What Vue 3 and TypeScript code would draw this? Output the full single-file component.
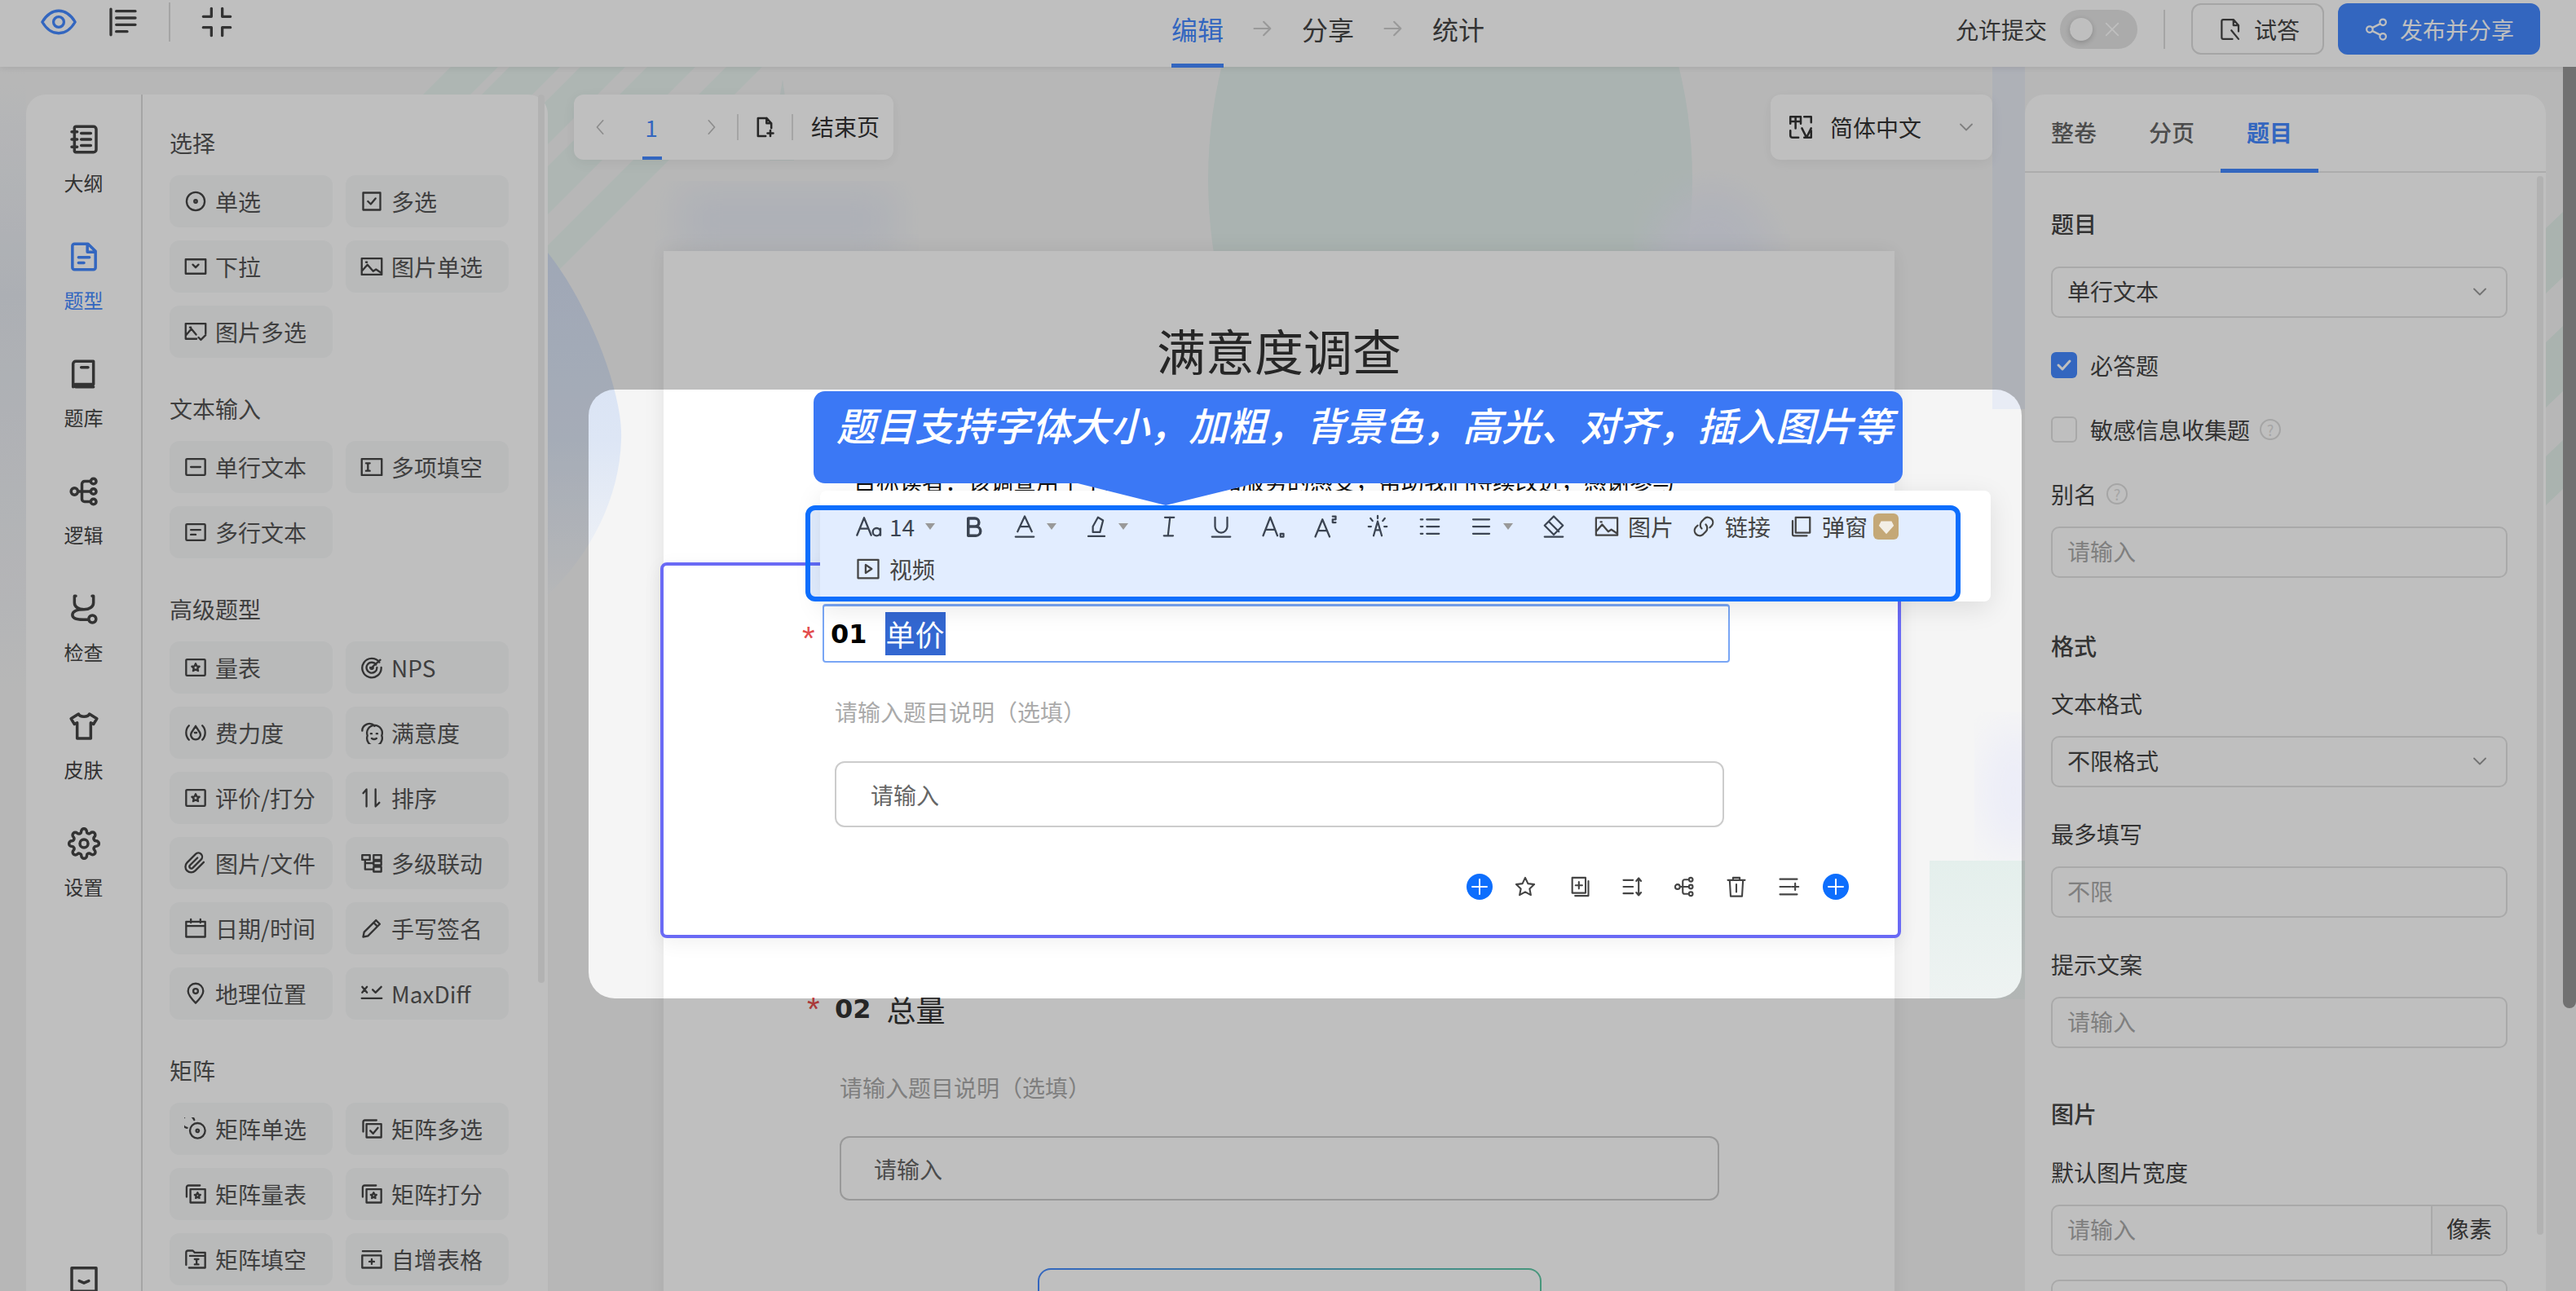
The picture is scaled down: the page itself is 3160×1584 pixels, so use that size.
<script setup lang="ts">
// stroke paths, all on a 24x24 box
const icons: Record<string, string> = {
  outline: "M6 2.5h13a2 2 0 0 1 2 2v15a2 2 0 0 1-2 2H6a1 1 0 0 1-1-1v-17a1 1 0 0 1 1-1z M3 6.5h4M3 12h4M3 17.5h4M10 7.5h7M10 12h7M10 16.5h7",
  doc: "M5 2.5h10l5.5 5.5v12a1.5 1.5 0 0 1-1.5 1.5H5A1.5 1.5 0 0 1 3.5 20V4A1.5 1.5 0 0 1 5 2.5z M14.5 2.5v6h6M8 12.5h8M8 16.5h4",
  book: "M6 2.5h13v17H6a2 2 0 0 0-2 2V4.5a2 2 0 0 1 2-2zM4 19.5a2 2 0 0 0 2 2h13M10 7h5",
  logic: "M2.5 12a2.5 2.5 0 1 0 5 0a2.5 2.5 0 1 0-5 0zM17 4.5a2 2 0 1 0 4 0a2 2 0 1 0-4 0zM17 12a2 2 0 1 0 4 0a2 2 0 1 0-4 0zM17 19.5a2 2 0 1 0 4 0a2 2 0 1 0-4 0zM7.5 12H17M10.5 12V6.5a2 2 0 0 1 2-2H17M10.5 12v5.5a2 2 0 0 0 2 2H17",
  scope: "M6 2.5H5v5c0 3 3 5 7 5s7-2 7-5v-5h-1M12 12.5c-5 0-8.5 1-8.5 4s3.5 3.5 8 3.5h4M15.5 19.5a2.7 2.7 0 1 0 5.4 0a2.7 2.7 0 1 0-5.4 0z",
  shirt: "M8 3L2.5 6.5l2.5 4 2-1V21h10V9.5l2 1 2.5-4L16 3c-1 2.5-7 2.5-8 0z",
  gear: "M9 12a3 3 0 1 0 6 0a3 3 0 1 0-6 0zM19.4 15a1.65 1.65 0 0 0 .33 1.82l.06.06a2 2 0 0 1 0 2.83 2 2 0 0 1-2.83 0l-.06-.06a1.65 1.65 0 0 0-1.82-.33 1.65 1.65 0 0 0-1 1.51V21a2 2 0 0 1-2 2 2 2 0 0 1-2-2v-.09A1.65 1.65 0 0 0 9 19.4a1.65 1.65 0 0 0-1.82.33l-.06.06a2 2 0 0 1-2.83 0 2 2 0 0 1 0-2.83l.06-.06a1.65 1.65 0 0 0 .33-1.82 1.65 1.65 0 0 0-1.51-1H3a2 2 0 0 1-2-2 2 2 0 0 1 2-2h.09A1.65 1.65 0 0 0 4.6 9a1.65 1.65 0 0 0-.33-1.82l-.06-.06a2 2 0 0 1 0-2.83 2 2 0 0 1 2.83 0l.06.06a1.65 1.65 0 0 0 1.82.33H9a1.65 1.65 0 0 0 1-1.51V3a2 2 0 0 1 2-2 2 2 0 0 1 2 2v.09a1.65 1.65 0 0 0 1 1.51 1.65 1.65 0 0 0 1.82-.33l.06-.06a2 2 0 0 1 2.83 0 2 2 0 0 1 0 2.83l-.06.06a1.65 1.65 0 0 0-.33 1.82V9a1.65 1.65 0 0 0 1.51 1H21a2 2 0 0 1 2 2 2 2 0 0 1-2 2h-.09a1.65 1.65 0 0 0-1.51 1z",
  fold: "M3 3.5h18v17H3zM8.5 13l3.5 1.5L15.5 13",
  radio: "M2.5 12a9.5 9.5 0 1 0 19 0a9.5 9.5 0 1 0-19 0zM10.5 12a1.5 1.5 0 1 0 3 0a1.5 1.5 0 1 0-3 0z",
  check: "M3 3h18v18H3zM8 12l3 3 5-6",
  drop: "M1.5 4.5h21v15h-21zM9 10l3 3 3-3",
  image: "M1.5 3.5h21v17h-21zM1.5 17l6-7 6 7 3-2 6 4M6 7.5h1",
  imagem: "M22.5 14V3.5h-21v16H13M1.5 16l6-7 5 6M6 7.5h1M15 18l2.5 2.5 5-5",
  line: "M3 3.5h18a1 1 0 0 1 1 1v15a1 1 0 0 1-1 1H3a1 1 0 0 1-1-1v-15a1 1 0 0 1 1-1zM7 12h10",
  multi: "M1.5 3.5h21v17h-21zM6 8h4M6 16h4M8 8v8",
  lines: "M3 3.5h18a1 1 0 0 1 1 1v15a1 1 0 0 1-1 1H3a1 1 0 0 1-1-1v-15a1 1 0 0 1 1-1zM7 9.5h10M7 14.5h5",
  scale: "M3 3.5h18a1 1 0 0 1 1 1v15a1 1 0 0 1-1 1H3a1 1 0 0 1-1-1v-15a1 1 0 0 1 1-1zM12 8l1.2 2.6 2.8.3-2 1.9.6 2.7-2.6-1.4-2.6 1.4.6-2.7-2-1.9 2.8-.3z",
  nps: "M20 6.5A10 10 0 1 0 22 12M16.5 9a5.5 5.5 0 1 0 1 3M10.5 12a1.5 1.5 0 1 0 3 0M12 12l9-8",
  effort: "M5 4.5c-4 4-4 11 0 15M19 4.5c4 4 4 11 0 15M12 5l-4.5 7a5 5 0 1 0 9 0zM11 12h2",
  smile: "M2 10a7.5 7.5 0 0 1 13-5M7.5 15a8 8 0 1 0 15 0a8 8 0 1 0-15 0zM11 13h1M17 13h1M12 18c1.5 1 3.5 1 5 0",
  sort: "M6.5 21V3L3 7M16 3v18l4-4",
  clip: "M20.5 11l-9 9a6 6 0 0 1-8.5-8.5l9-9a4 4 0 0 1 5.7 5.7l-9 9a2 2 0 0 1-2.8-2.8l8-8",
  cascade: "M2 3.5h8v5H2zM14 3.5h8v5h-8zM14 10h8v4h-8zM14 16h8v5h-8zM5 8.5V18.5h9M5 12h9",
  date: "M2 5h20v16H2zM2 9.5h20M7 2.5V6M17 2.5V6",
  pen: "M3 21l1-5L16.5 3.5l4 4L8 20zM14 6l4 4",
  pin: "M12 22c-5-5-8-8.5-8-12.5a8 8 0 0 1 16 0c0 4-3 7.5-8 12.5zM9.5 9.5a2.5 2.5 0 1 0 5 0a2.5 2.5 0 1 0-5 0z",
  maxdiff: "M2 5l5 6M7 5l-5 6M13 8l3 3 6-6M1.5 17h21",
  mradio: "M10.5 2.6A6.5 6.5 0 1 0 3 11M6 14a8 8 0 1 0 16 0a8 8 0 1 0-16 0zM12.5 14a1.5 1.5 0 1 0 3 0a1.5 1.5 0 1 0-3 0z",
  mcheck: "M3 15V5a2 2 0 0 1 2-2h12M6.5 7h15.5v14H6.5zM10.5 14l3 3 5-6",
  mscale: "M2.5 15V5a2 2 0 0 1 2-2h12M6.5 7h15.5v14H6.5zM14 10.5l1 2 2 .3-1.5 1.4.4 2-1.9-1-1.9 1 .4-2-1.5-1.4 2-.3z",
  mfill: "M2 18V5a2 2 0 0 1 2-2h5l2 2h11v16H5M6 8.5h16M11 12h4M13 12v5.5M11 17.5h4",
  addtable: "M2.5 3.5h19M2 8h20v13H2zM9.5 14.5h5M12 12v5",
  list: "M3 2.5v19M7 4h14M7 9h14M7 14h14M7 19h8",
  share: "M2.5 12a3 3 0 1 0 6 0a3 3 0 1 0-6 0zM15.5 5a3 3 0 1 0 6 0a3 3 0 1 0-6 0zM15.5 19a3 3 0 1 0 6 0a3 3 0 1 0-6 0zM8 10.5l8-4M8 13.5l8 4",
  trial: "M15 2.5H5a1.5 1.5 0 0 0-1.5 1.5v16A1.5 1.5 0 0 0 5 21.5h9M15 2.5L20 8v6M15 2.5V8h5M13 13l7 8.5",
  chevron: "M5 8.5l7 7 7-7",
  chevleft: "M15 3l-8 9 8 9",
  chevright: "M9 3l8 9-8 9",
  arrow: "M3 12h17M13 5l7 7-7 7",
  addpage: "M14 2.5H5v19h8M14 2.5L19 8v5M14 2.5V8h5M18 15.5v6M15 18.5h6",
  lang: "M3 9V3h9v6M7.5 3v10M3 7h9M15 3h6v5M21 15v6h-6M3 15v4a2 2 0 0 0 2 2h5M13 13l4 8 4-8",
  highlight: "M4 21.5h16M8.5 17.5V12l5-9 5 3-3 11.5z",
  bold: "M7 4h6.5a4 4 0 0 1 0 8H7zM7 12h7.5a4.5 4.5 0 0 1 0 9H7z",
  sun: "M12 7l-4 14M12 7l4 14M9.5 15.5h5M12 1.5v2.5M5 4l2 2.5M19 4l-2 2.5M3 12h2.5M21 12h-2.5",
  bullets: "M3 5h2M3 12h2M3 19h2M9 5h12M9 12h12M9 19h12",
  align: "M4 5h16M4 12h16M4 19h16",
  eraser: "M12 2l9 9-9 9-9-9zM7 7l10 10M3 22h18",
  link: "M10 14a5 5 0 0 1 0-7l3-3a5 5 0 0 1 7 7l-2 2M14 10a5 5 0 0 1 0 7l-3 3a5 5 0 0 1-7-7l2-2",
  popup: "M7 3h14v15H7zM4 6.5v13a1.5 1.5 0 0 0 1.5 1.5H18",
  video: "M2 3h20v18H2zM9.5 8v8l6-4z",
  star: "M12 2.5l2.9 6.2 6.6.8-4.9 4.6 1.3 6.6-5.9-3.3-5.9 3.3 1.3-6.6-4.9-4.6 6.6-.8z",
  copy: "M4 2.5h14v16H4zM21 6v15.5H7M11 7v7M7.5 10.5h7",
  sortlines: "M3 5h10M3 12h10M3 19h10M19 3v18M16.5 6L19 3l2.5 3M16.5 18l2.5 3 2.5-3",
  trash: "M3 5h18M8.5 5V2.5h7V5M5 5l1 17h12l1-17M12 9.5v8",
  addlines: "M3 4h18M3 12h11M3 20h18M19 8.5v7M15.5 12h7",
  plus: "M3 12h18M12 3v18",
  close: "M4 4l16 16M20 4L4 20",
}

type Item = { label: string; icon: string }
type Section = { title: string; items: Item[] }

const rail: (Item & { active?: boolean })[] = [
  { label: "大纲", icon: "outline" },
  { label: "题型", icon: "doc", active: true },
  { label: "题库", icon: "book" },
  { label: "逻辑", icon: "logic" },
  { label: "检查", icon: "scope" },
  { label: "皮肤", icon: "shirt" },
  { label: "设置", icon: "gear" },
]

const sections: Section[] = [
  {
    title: "选择",
    items: [
      { label: "单选", icon: "radio" },
      { label: "多选", icon: "check" },
      { label: "下拉", icon: "drop" },
      { label: "图片单选", icon: "image" },
      { label: "图片多选", icon: "imagem" },
    ],
  },
  {
    title: "文本输入",
    items: [
      { label: "单行文本", icon: "line" },
      { label: "多项填空", icon: "multi" },
      { label: "多行文本", icon: "lines" },
    ],
  },
  {
    title: "高级题型",
    items: [
      { label: "量表", icon: "scale" },
      { label: "NPS", icon: "nps" },
      { label: "费力度", icon: "effort" },
      { label: "满意度", icon: "smile" },
      { label: "评价/打分", icon: "scale" },
      { label: "排序", icon: "sort" },
      { label: "图片/文件", icon: "clip" },
      { label: "多级联动", icon: "cascade" },
      { label: "日期/时间", icon: "date" },
      { label: "手写签名", icon: "pen" },
      { label: "地理位置", icon: "pin" },
      { label: "MaxDiff", icon: "maxdiff" },
    ],
  },
  {
    title: "矩阵",
    items: [
      { label: "矩阵单选", icon: "mradio" },
      { label: "矩阵多选", icon: "mcheck" },
      { label: "矩阵量表", icon: "mscale" },
      { label: "矩阵打分", icon: "mscale" },
      { label: "矩阵填空", icon: "mfill" },
      { label: "自增表格", icon: "addtable" },
    ],
  },
]

const fields = [
  { label: "最多填写", placeholder: "不限" },
  { label: "提示文案", placeholder: "请输入" },
]

const questionOps = ["star", "copy", "sortlines", "logic", "trash", "addlines"]

// diagonal stripes behind the canvas, x of the left edge at the top of the page
const stripes = [
  { x: 553, w: 58 },
  { x: 625, w: 62 },
  { x: 712, w: 55 },
  { x: 794, w: 59 },
  { x: 891, w: 44 },
]
</script>

<template>
  <div class="app">
    <!-- page background artwork -->
    <svg class="backdrop" width="3160" height="1584" viewBox="0 0 3160 1584">
      <defs>
        <linearGradient id="fade" x1="0" y1="0" x2="0" y2="1">
          <stop offset="0" stop-color="#e4efec" />
          <stop offset="1" stop-color="#eef3f2" />
        </linearGradient>
        <linearGradient id="edge" x1="0" y1="0" x2="0" y2="1">
          <stop offset="0" stop-color="#f5f5f5" />
          <stop offset="0.35" stop-color="#e6eaf1" />
          <stop offset="1" stop-color="#f5f5f5" />
        </linearGradient>
        <linearGradient id="blob" x1="0" y1="0" x2="0" y2="1">
          <stop offset="0" stop-color="#d5e0f3" />
          <stop offset="0.55" stop-color="#dde6f5" />
          <stop offset="1" stop-color="#f3f4f6" />
        </linearGradient>
        <filter id="soft"><feGaussianBlur stdDeviation="24" /></filter>
      </defs>
      <rect x="0" y="82" width="32" height="800" fill="url(#edge)" />
      <g fill="#e8f3ef">
        <path v-for="s in stripes" :key="s.x" :d="`M${s.x} 82h${s.w}L${s.x + s.w - 300} 382h-${s.w}z`" />
      </g>
      <path d="M960 97l14 100h-30z" fill="#e6f0ee" />
      <path d="M830 230h270v80H830z" fill="#e8ecf4" filter="url(#soft)" />
      <ellipse cx="1779" cy="220" rx="297" ry="420" fill="#e3efec" />
      <ellipse cx="2100" cy="340" rx="80" ry="110" fill="#ebeef8" filter="url(#soft)" />
      <rect x="2444" y="82" width="40" height="420" fill="#e8ecf5" />
      <path d="M3123 280l21-20v80l-21 20zM3123 420l21-20v80l-21 20zM3123 560l21-20v60l-21 20z" fill="#e3efea" />
      <path d="M672 310C720 370 765 480 762 540C760 610 725 680 672 730Z" fill="url(#blob)" />
      <ellipse cx="2470" cy="970" rx="40" ry="80" fill="#ecedf8" filter="url(#soft)" />
      <rect x="2367" y="1056" width="140" height="170" fill="url(#fade)" />
    </svg>

    <header class="topbar">
      <div class="top-left">
        <svg class="ic eye" viewBox="0 0 24 24"><path d="M1 12c3-5 7-7.5 11-7.5S20 7 23 12c-3 5-7 7.5-11 7.5S4 17 1 12zM8.5 12a3.5 3.5 0 1 0 7 0a3.5 3.5 0 1 0-7 0z" /></svg>
        <svg class="ic top-ic" viewBox="0 0 24 24"><path :d="icons.list" /></svg>
        <span class="top-sep"></span>
        <svg class="ic top-ic" viewBox="0 0 24 24"><path d="M8 2v6H2M16 2v6h6M8 22v-6H2M16 22v-6h6" /></svg>
      </div>
      <nav class="steps">
        <span class="step active">编辑</span>
        <svg class="ic step-arrow" viewBox="0 0 24 24"><path :d="icons.arrow" /></svg>
        <span class="step">分享</span>
        <svg class="ic step-arrow" viewBox="0 0 24 24"><path :d="icons.arrow" /></svg>
        <span class="step">统计</span>
      </nav>
      <div class="top-right">
        <span>允许提交</span>
        <span class="switch">
          <i class="knob"></i>
          <svg class="ic switch-x" viewBox="0 0 24 24"><path :d="icons.close" /></svg>
        </span>
        <span class="right-sep"></span>
        <button class="btn-ghost">
          <svg class="ic btn-ic" viewBox="0 0 24 24"><path :d="icons.trial" /></svg>
          试答
        </button>
        <button class="btn-primary">
          <svg class="ic btn-ic" viewBox="0 0 24 24"><path :d="icons.share" /></svg>
          发布并分享
        </button>
      </div>
    </header>

    <div class="main">
      <aside class="sidebar">
        <div class="rail">
          <div v-for="r in rail" :key="r.label" class="rail-item" :class="{ on: r.active }">
            <svg class="ic rail-ic" viewBox="0 0 24 24"><path :d="icons[r.icon]" /></svg>
            <span>{{ r.label }}</span>
          </div>
          <svg class="ic rail-ic rail-foot" viewBox="0 0 24 24"><path :d="icons.fold" /></svg>
        </div>
        <div class="palette">
          <section v-for="s in sections" :key="s.title" class="group">
            <h4>{{ s.title }}</h4>
            <div class="grid">
              <div v-for="it in s.items" :key="it.label" class="type-btn">
                <svg class="ic type-ic" viewBox="0 0 24 24"><path :d="icons[it.icon]" /></svg>
                {{ it.label }}
              </div>
            </div>
          </section>
        </div>
        <i class="side-thumb"></i>
      </aside>

      <main class="center">
        <div class="controls">
          <div class="float-card pager">
            <svg class="ic pager-ch" viewBox="0 0 24 24"><path :d="icons.chevleft" /></svg>
            <span class="page-no">1</span>
            <svg class="ic pager-ch" viewBox="0 0 24 24"><path :d="icons.chevright" /></svg>
            <span class="pager-sep"></span>
            <svg class="ic pager-add" viewBox="0 0 24 24"><path :d="icons.addpage" /></svg>
            <span class="pager-sep"></span>
            <span class="end-page">结束页</span>
          </div>
          <div class="float-card lang">
            <svg class="ic lang-ic" viewBox="0 0 24 24"><path :d="icons.lang" /></svg>
            <span>简体中文</span>
            <svg class="ic lang-ch" viewBox="0 0 24 24"><path :d="icons.chevron" /></svg>
          </div>
        </div>

        <div class="paper">
          <h1 class="survey-title">满意度调查</h1>
          <p class="survey-desc">目标读者：该调查用于了解您对产品和服务的感受，帮助我们持续改进，感谢参与</p>

          <div class="q-card">
            <div class="q-head">
              <span class="req">*</span>
              <div class="q-input">
                <b class="q-no">01</b>
                <span class="q-sel">单价</span>
              </div>
            </div>
            <p class="q-hint">请输入题目说明（选填）</p>
            <div class="q-answer">请输入</div>
            <div class="q-ops">
              <span class="add-dot"><svg class="ic" viewBox="0 0 24 24"><path :d="icons.plus" /></svg></span>
              <svg v-for="op in questionOps" :key="op" class="ic op" viewBox="0 0 24 24"><path :d="icons[op]" /></svg>
              <span class="add-dot"><svg class="ic" viewBox="0 0 24 24"><path :d="icons.plus" /></svg></span>
            </div>
          </div>

          <div class="q2-head">
            <span class="req2">*</span><b class="q2-no">02</b><span class="q2-title">总量</span>
          </div>
          <p class="q2-hint">请输入题目说明（选填）</p>
          <div class="q2-answer">请输入</div>
          <div class="add-question"></div>
        </div>
      </main>

      <aside class="props">
        <div class="tabs">
          <span class="tab">整卷</span>
          <span class="tab">分页</span>
          <span class="tab active">题目</span>
        </div>
        <div class="props-body">
          <h4 class="prop-title first">题目</h4>
          <div class="control value select-first">
            单行文本
            <svg class="ic control-ch" viewBox="0 0 24 24"><path :d="icons.chevron" /></svg>
          </div>
          <label class="check-row">
            <i class="box checked"><svg class="ic" viewBox="0 0 24 24"><path d="M5 12l5 5 9-10" /></svg></i>必答题
          </label>
          <label class="check-row second">
            <i class="box"></i>敏感信息收集题<i class="help">?</i>
          </label>
          <div class="field-label">别名<i class="help">?</i></div>
          <div class="control">请输入</div>
          <h4 class="prop-title format">格式</h4>
          <div class="field">
            <div class="field-label">文本格式</div>
            <div class="control value">
              不限格式
              <svg class="ic control-ch" viewBox="0 0 24 24"><path :d="icons.chevron" /></svg>
            </div>
          </div>
          <div v-for="f in fields" :key="f.label" class="field">
            <div class="field-label">{{ f.label }}</div>
            <div class="control">{{ f.placeholder }}</div>
          </div>
          <h4 class="prop-title picture">图片</h4>
          <div class="field last">
            <div class="field-label">默认图片宽度</div>
            <div class="control with-unit">请输入<span class="unit">像素</span></div>
          </div>
          <div class="control"></div>
        </div>
        <i class="props-thumb"></i>
      </aside>
    </div>
    <i class="page-thumb"></i>

    <!-- guide overlay: dim everything outside of the spotlight -->
    <div class="spotlight"></div>
    <div class="popover-sheet"></div>
    <div class="rich-toolbar">
      <span class="tool font-size">
        <svg class="ic t-ic" viewBox="0 0 24 24"><path d="M1 20L7.5 4 14 20M3.5 14h8M22.5 14v6M22.5 17a3.5 3.5 0 1 1-7 0a3.5 3.5 0 1 1 7 0z" /></svg>
        <span>14</span><i class="caret"></i>
      </span>
      <span class="tool"><svg class="ic t-ic heavy" viewBox="0 0 24 24"><path :d="icons.bold" /></svg></span>
      <span class="tool drop">
        <svg class="ic t-ic" viewBox="0 0 24 24"><path d="M5 17L12 2l7 15M7.5 12h9M3 22h18" /></svg><i class="caret"></i>
      </span>
      <span class="tool drop">
        <svg class="ic t-ic" viewBox="0 0 24 24"><path :d="icons.highlight" /></svg><i class="caret"></i>
      </span>
      <span class="tool"><svg class="ic t-ic" viewBox="0 0 24 24"><path d="M8 3h9M7 21h9M13 3l-2 18" /></svg></span>
      <span class="tool"><svg class="ic t-ic" viewBox="0 0 24 24"><path d="M6 3v9a6 6 0 0 0 12 0V3M3 22h18" /></svg></span>
      <span class="tool"><svg class="ic t-ic" viewBox="0 0 24 24"><path d="M2 21L9 3l7 18M4.5 15h9M19 19h3v3h-3z" /></svg></span>
      <span class="tool"><svg class="ic t-ic" viewBox="0 0 24 24"><path d="M2 22L9 5l7 17M4.5 16h9M19 2h3v3h-3v3h3" /></svg></span>
      <span class="tool"><svg class="ic t-ic" viewBox="0 0 24 24"><path :d="icons.sun" /></svg></span>
      <span class="tool"><svg class="ic t-ic" viewBox="0 0 24 24"><path :d="icons.bullets" /></svg></span>
      <span class="tool drop">
        <svg class="ic t-ic" viewBox="0 0 24 24"><path :d="icons.align" /></svg><i class="caret"></i>
      </span>
      <span class="tool"><svg class="ic t-ic" viewBox="0 0 24 24"><path :d="icons.eraser" /></svg></span>
      <span class="tool-text first"><svg class="ic t-ic" viewBox="0 0 24 24"><path :d="icons.image" /></svg>图片</span>
      <span class="tool-text"><svg class="ic t-ic" viewBox="0 0 24 24"><path :d="icons.link" /></svg>链接</span>
      <span class="tool-text"><svg class="ic t-ic" viewBox="0 0 24 24"><path :d="icons.popup" /></svg>弹窗</span>
      <span class="vip"><svg viewBox="0 0 24 24"><path d="M5 5h14l3 6-10 11L2 11z" /></svg></span>
      <span class="tool-text video"><svg class="ic t-ic" viewBox="0 0 24 24"><path :d="icons.video" /></svg>视频</span>
    </div>
    <div class="tip">
      题目支持字体大小，加粗，背景色，高光、对齐，插入图片等
      <i class="tip-tail"></i>
    </div>
  </div>
</template>

<style>
html,
body {
  margin: 0;
  overflow: hidden;
}
</style>

<style scoped>
.app {
  position: relative;
  width: 3160px;
  height: 1584px;
  overflow: hidden;
  background: #f5f5f5;
  font-family: "Noto Sans CJK SC", "Noto Sans", sans-serif;
  font-size: 28px;
  color: #444;
}
.backdrop {
  position: absolute;
  left: 0;
  top: 0;
}
.ic {
  display: block;
  flex: none;
  fill: none;
  stroke: currentColor;
  stroke-width: 1.8;
  stroke-linecap: round;
  stroke-linejoin: round;
}

/* top bar */
.topbar {
  position: relative;
  display: flex;
  height: 82px;
  background: #fff;
  box-shadow: 0 2px 8px rgba(0, 0, 0, 0.08);
}
.top-left {
  display: flex;
  align-items: center;
  flex: none;
  width: 1437px;
  height: 54px;
  padding-left: 50px;
  box-sizing: border-box;
}
.eye {
  width: 44px;
  height: 44px;
  color: #4489ff;
}
.top-ic {
  width: 40px;
  height: 40px;
  margin-left: 37px;
  color: #444;
  stroke-width: 2;
}
.top-sep {
  width: 2px;
  height: 48px;
  margin-left: 36px;
  background: #ddd;
}
.top-sep + .top-ic {
  margin-left: 37px;
}
.steps {
  display: flex;
  align-items: flex-start;
  flex: 1;
  font-size: 32px;
  line-height: 70px;
}
.step {
  display: block;
  height: 83px;
  box-sizing: border-box;
}
.step.active {
  color: #4489ff;
  border-bottom: 5px solid #4489ff;
}
.step-arrow {
  width: 28px;
  height: 28px;
  margin: 21px 34px 0;
  color: #ccc;
}
.top-right {
  display: flex;
  align-items: center;
  flex: none;
  height: 71px;
  padding-right: 44px;
}
.switch {
  position: relative;
  display: flex;
  align-items: center;
  width: 95px;
  height: 48px;
  margin-left: 16px;
  border-radius: 24px;
  background: #e4e4e4;
}
.knob {
  width: 28px;
  height: 28px;
  margin-left: 12px;
  border-radius: 50%;
  background: #fff;
  box-shadow: 0 2px 6px rgba(0, 0, 0, 0.2);
}
.switch-x {
  width: 22px;
  height: 22px;
  margin-left: 13px;
  color: #fff;
}
.right-sep {
  width: 2px;
  height: 48px;
  margin: 0 32px;
  background: #ddd;
}
.btn-ghost,
.btn-primary {
  display: flex;
  align-items: center;
  height: 63px;
  border-radius: 12px;
  box-sizing: border-box;
  font: inherit;
}
.btn-ghost {
  width: 163px;
  padding-left: 31px;
  gap: 14px;
  border: 2px solid #ddd;
  background: none;
  color: #444;
}
.btn-primary {
  width: 248px;
  margin-left: 17px;
  padding-left: 32px;
  gap: 14px;
  border: 0;
  background: #4489ff;
  color: #fff;
}
.btn-ic {
  width: 30px;
  height: 30px;
}

.main {
  display: flex;
  position: relative;
  align-items: flex-start;
  height: 1502px;
  padding: 34px 0 0 32px;
  box-sizing: border-box;
}

/* left sidebar */
.sidebar {
  position: relative;
  display: flex;
  flex: none;
  width: 640px;
  height: 1500px;
  border-radius: 24px 24px 0 0;
  background: #fff;
}
.rail {
  display: flex;
  flex-direction: column;
  align-items: center;
  flex: none;
  width: 143px;
  padding: 35px 0 26px;
  box-sizing: border-box;
  border-right: 2px solid #ddd;
  gap: 54px;
  color: #444;
}
.rail-item {
  display: flex;
  flex-direction: column;
  align-items: center;
  gap: 16px;
  font-size: 24px;
  line-height: 34px;
}
.rail-item.on {
  color: #4489ff;
}
.rail-ic {
  width: 40px;
  height: 40px;
  stroke-width: 2.1;
}
.rail-foot {
  margin-top: auto;
}
.palette {
  padding: 39px 0 0 33px;
}
.group {
  margin-bottom: 42px;
}
.group h4 {
  margin: 0 0 20px;
  font-size: 28px;
  font-weight: 400;
  line-height: 40px;
  color: #555;
}
.grid {
  display: grid;
  grid-template-columns: 200px 200px;
  grid-auto-rows: 64px;
  gap: 16px;
}
.type-btn {
  display: flex;
  align-items: center;
  gap: 10px;
  padding-left: 18px;
  border-radius: 12px;
  background: #f7f8f9;
  color: #555;
}
.type-ic {
  width: 28px;
  height: 28px;
  color: #444;
  stroke-width: 2;
}
.side-thumb {
  position: absolute;
  left: 628px;
  top: 0;
  width: 8px;
  height: 1090px;
  border-radius: 4px;
  background: #eee;
}

/* center canvas */
.center {
  flex: none;
  width: 1812px;
}
.controls {
  display: flex;
  justify-content: space-between;
  margin: 0 40px 0 32px;
}
.float-card {
  display: flex;
  align-items: center;
  height: 80px;
  border-radius: 12px;
  background: #fff;
  box-shadow: 0 4px 16px rgba(0, 0, 0, 0.06);
}
.pager {
  position: relative;
  width: 392px;
  padding-left: 22px;
  box-sizing: border-box;
}
.pager-ch {
  width: 22px;
  height: 30px;
  color: #bbb;
}
.page-no {
  width: 24px;
  margin: 0 50px 0 39px;
  text-align: center;
  color: #4489ff;
}
.page-no::after {
  content: "";
  position: absolute;
  left: 84px;
  bottom: 0;
  width: 24px;
  height: 4px;
  background: #4489ff;
}
.pager-sep {
  width: 2px;
  height: 32px;
  margin-left: 21px;
  background: #ddd;
}
.pager-add {
  width: 28px;
  height: 28px;
  margin-left: 18px;
  color: #333;
  stroke-width: 2.2;
}
.pager-add + .pager-sep {
  margin-left: 19px;
}
.end-page {
  margin-left: 22px;
  padding-bottom: 3px;
  color: #333;
}
.lang {
  width: 272px;
  padding-left: 20px;
  box-sizing: border-box;
  color: #333;
}
.lang-ic {
  width: 34px;
  height: 34px;
  margin-right: 19px;
}
.lang-ch {
  width: 24px;
  height: 24px;
  margin-left: 43px;
  color: #aaa;
}
.paper {
  width: 1510px;
  height: 1300px;
  margin: 112px 0 0 142px;
  padding-top: 81px;
  box-sizing: border-box;
  background: #fff;
  box-shadow: 0 0 24px rgba(0, 0, 0, 0.08);
}
.survey-title {
  margin: 0;
  font-size: 60px;
  font-weight: 400;
  line-height: 80px;
  text-align: center;
  color: #333;
}
.survey-desc {
  margin: 101px 0 0 233px;
  line-height: 40px;
  color: #111;
}
.q-card {
  width: 1522px;
  height: 461px;
  margin: 80px 0 0 -4px;
  padding: 47px 0 0 170px;
  box-sizing: border-box;
  border: 4px solid #6a6af5;
  border-radius: 8px;
  background: #fff;
  box-shadow: 0 6px 24px rgba(0, 0, 0, 0.06);
}
.q-head {
  display: flex;
}
.req {
  flex: none;
  width: 25px;
  padding-top: 14px;
  font-family: "Liberation Sans", sans-serif;
  font-size: 40px;
  line-height: 56px;
  color: #e34d4d;
}
.q-input {
  display: flex;
  align-items: center;
  width: 1113px;
  height: 72px;
  padding-left: 8px;
  box-sizing: border-box;
  border: 2px solid #79a6f5;
  border-top-width: 3px;
  border-radius: 4px;
}
.q-no {
  font-family: "DejaVu Sans", sans-serif;
  font-size: 32px;
  color: #000;
}
.q-sel {
  margin-left: 22px;
  padding: 0 1px;
  font-size: 36px;
  line-height: 53px;
  color: #fff;
  background: #3367d1;
}
.q-hint {
  margin: 40px 0 0 40px;
  line-height: 40px;
  color: #aaa;
}
.q-answer {
  width: 1091px;
  height: 81px;
  margin: 41px 0 0 40px;
  padding-left: 42px;
  box-sizing: border-box;
  border: 2px solid #ccc;
  border-radius: 12px;
  line-height: 79px;
  color: #666;
}
.q-ops {
  display: flex;
  align-items: center;
  justify-content: flex-end;
  gap: 32px;
  width: 1284px;
  height: 32px;
  margin-top: 57px;
  color: #444;
}
.op {
  width: 28px;
  height: 28px;
  margin: 0 2px;
}
.op:nth-child(2) {
  margin-right: 5px;
}
.add-dot {
  display: flex;
  align-items: center;
  justify-content: center;
  width: 32px;
  height: 32px;
  border-radius: 50%;
  color: #fff;
  background: #0d6efd;
}
.add-dot:first-child {
  margin-right: -8px;
}
.add-dot:last-child {
  margin-left: -6px;
}
.add-dot .ic {
  width: 24px;
  height: 24px;
  stroke-width: 2;
}
.q2-head {
  display: flex;
  align-items: center;
  height: 40px;
  margin: 67px 0 0 176px;
  color: #333;
}
.req2 {
  width: 34px;
  font-family: "Liberation Sans", sans-serif;
  font-size: 40px;
  color: #e34d4d;
}
.q2-no {
  font-family: "DejaVu Sans", sans-serif;
  font-size: 32px;
}
.q2-title {
  margin-left: 19px;
  font-size: 36px;
}
.q2-hint {
  margin: 56px 0 0 216px;
  line-height: 40px;
  color: #aaa;
}
.q2-answer {
  width: 1079px;
  height: 79px;
  margin: 40px 0 0 216px;
  padding-left: 40px;
  box-sizing: border-box;
  border: 2px solid #ccc;
  border-radius: 12px;
  line-height: 77px;
  color: #666;
}
.add-question {
  width: 618px;
  height: 90px;
  margin: 83px 0 0 459px;
  box-sizing: border-box;
  border: 2px solid transparent;
  border-radius: 16px;
  background: linear-gradient(#fff, #fff) padding-box, linear-gradient(90deg, #4489ff, #5fc9a5) border-box;
}

/* right properties panel */
.props {
  position: relative;
  flex: none;
  width: 639px;
  height: 1500px;
  border-radius: 24px 24px 0 0;
  background: #fff;
}
.tabs {
  display: flex;
  height: 96px;
  box-sizing: border-box;
  border-bottom: 2px solid #e6e6e6;
}
.tab {
  width: 120px;
  height: 96px;
  padding-top: 25px;
  box-sizing: border-box;
  line-height: 42px;
  text-align: center;
  font-weight: 500;
  color: #666;
}
.tab.active {
  font-weight: 700;
  color: #4489ff;
  border-bottom: 5px solid #4489ff;
}
.props-body {
  padding: 44px 47px 0 32px;
}
.prop-title {
  height: 40px;
  margin: 0;
  box-sizing: border-box;
  font-size: 28px;
  font-weight: 500;
  line-height: 36px;
  color: #444;
}
.prop-title.first {
  margin-bottom: 31px;
}
.prop-title.format {
  margin: 65px 0 31px;
}
.prop-title.picture {
  margin: 62px 0 32px;
}
.control {
  position: relative;
  display: flex;
  align-items: center;
  height: 63px;
  padding: 0 0 3px 18px;
  box-sizing: border-box;
  border: 2px solid #e2e2e2;
  border-radius: 10px;
  color: #aaa;
}
.control.value {
  color: #444;
}
.control-ch {
  position: absolute;
  right: 20px;
  top: 17px;
  width: 24px;
  height: 24px;
  color: #999;
}
.select-first {
  margin-bottom: 43px;
}
.check-row {
  display: flex;
  align-items: center;
  height: 32px;
  padding-bottom: 3px;
  box-sizing: border-box;
  line-height: 28px;
  color: #444;
}
.check-row.second {
  margin: 47px 0 44px;
}
.box {
  display: flex;
  align-items: center;
  justify-content: center;
  flex: none;
  width: 32px;
  height: 32px;
  margin-right: 16px;
  box-sizing: border-box;
  border: 2px solid #e0e0e0;
  border-radius: 6px;
}
.box .ic {
  width: 24px;
  height: 24px;
  stroke-width: 3;
  color: #fff;
}
.box.checked {
  border: 0;
  background: #4489ff;
}
.help {
  display: inline-flex;
  align-items: center;
  justify-content: center;
  width: 26px;
  height: 26px;
  margin-left: 12px;
  box-sizing: border-box;
  border: 2px solid #ddd;
  border-radius: 50%;
  font-size: 18px;
  font-style: normal;
  color: #ddd;
}
.field {
  margin-bottom: 39px;
}
.field.last {
  margin-bottom: 29px;
}
.field-label {
  display: flex;
  align-items: center;
  height: 40px;
  margin-bottom: 18px;
  padding-bottom: 4px;
  box-sizing: border-box;
  color: #444;
}
.with-unit {
  padding-right: 90px;
}
.unit {
  position: absolute;
  right: 0;
  top: 0;
  bottom: 0;
  width: 90px;
  line-height: 55px;
  text-align: center;
  border-left: 2px solid #e2e2e2;
  border-radius: 0 10px 10px 0;
  background: #fafafa;
  color: #444;
}
.props-thumb {
  position: absolute;
  left: 628px;
  top: 100px;
  width: 8px;
  height: 1299px;
  border-radius: 4px;
  background: #eee;
}
.page-thumb {
  position: absolute;
  left: 3144px;
  top: 82px;
  width: 16px;
  height: 1155px;
  border-radius: 0 0 8px 8px;
  background: #979797;
}

/* guide overlay */
.spotlight {
  position: absolute;
  left: 722px;
  top: 478px;
  width: 1758px;
  height: 747px;
  border-radius: 32px;
  box-shadow: 0 0 0 4000px rgba(0, 0, 0, 0.25);
}
.popover-sheet {
  position: absolute;
  left: 1006px;
  top: 602px;
  width: 1436px;
  height: 136px;
  border-radius: 8px;
  background: #fff;
  box-shadow: 0 8px 32px rgba(0, 0, 0, 0.1);
}
.rich-toolbar {
  position: absolute;
  left: 988px;
  top: 620px;
  display: flex;
  flex-wrap: wrap;
  align-content: flex-start;
  align-items: center;
  width: 1417px;
  height: 118px;
  padding: 0 0 0 56px;
  box-sizing: border-box;
  border: 6px solid #0d6efd;
  border-radius: 12px;
  background: rgba(13, 110, 253, 0.12);
  color: #3b4452;
}
.tool {
  display: flex;
  align-items: center;
  justify-content: center;
  width: 64px;
  height: 40px;
}
.tool.font-size {
  justify-content: flex-start;
  width: 112px;
  gap: 9px;
}
.tool.font-size .t-ic {
  width: 32px;
  height: 32px;
}
.tool.font-size .caret {
  margin-left: 4px;
}
.tool.drop {
  justify-content: flex-start;
  width: 88px;
  padding-left: 16px;
  box-sizing: border-box;
  gap: 12px;
}
.t-ic {
  width: 30px;
  height: 30px;
  stroke-width: 1.8;
}
.t-ic.heavy {
  stroke-width: 2.8;
}
.caret {
  width: 0;
  height: 0;
  border: 6px solid transparent;
  border-top: 8px solid #999;
  border-bottom: 0;
}
.tool-text {
  display: flex;
  align-items: center;
  gap: 11px;
  height: 40px;
  margin-left: 22px;
  color: #444;
}
.tool-text.first {
  margin-left: 18px;
}
.tool-text.video {
  width: 1300px;
  margin: 12px 0 0;
}
.vip {
  display: flex;
  align-items: center;
  justify-content: center;
  width: 31px;
  height: 32px;
  margin-left: 7px;
  border-radius: 6px;
  background: #c4a877;
}
.vip svg {
  width: 22px;
  height: 22px;
  fill: #f3efe6;
}
.tip {
  position: absolute;
  left: 998px;
  top: 480px;
  width: 1336px;
  height: 113px;
  padding: 8px 0 0 28px;
  box-sizing: border-box;
  border-radius: 14px;
  background: #3b78f5;
  color: #fff;
  font-size: 48px;
  font-style: italic;
  font-weight: 500;
  line-height: 64px;
  white-space: nowrap;
}
.tip-tail {
  position: absolute;
  left: 324px;
  top: 113px;
  width: 0;
  height: 0;
  border-left: 108px solid transparent;
  border-right: 110px solid transparent;
  border-top: 27px solid #3b78f5;
}
</style>
